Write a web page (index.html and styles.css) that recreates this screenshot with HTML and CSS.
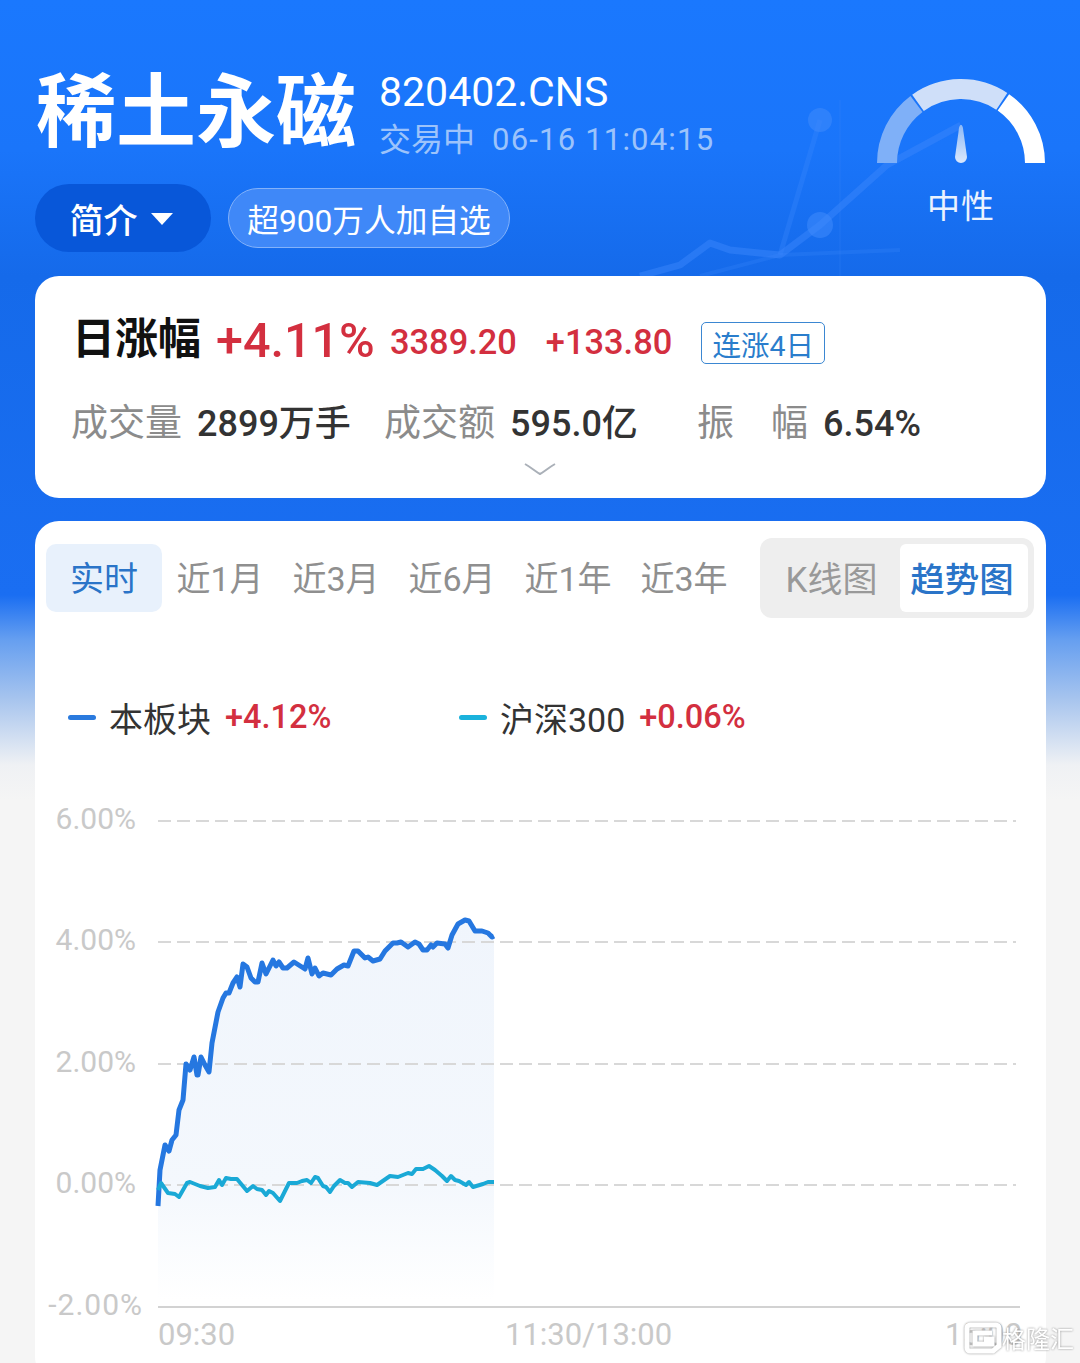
FILE: index.html
```html
<!DOCTYPE html>
<html lang="zh-CN">
<head>
<meta charset="utf-8">
<title>稀土永磁</title>
<link rel="stylesheet" href="styles.css">
</head>
<body>
<div class="page">
  <svg class="decor" width="1080" height="276" viewBox="0 0 1080 276">
    <line class="decor-rule" x1="840" y1="100" x2="840" y2="276"/>
    <polyline class="decor-line" points="640,276 680,265 710,243 730,250 780,255 820,225 887,165 961,125"/>
    <polyline class="decor-line soft" points="700,276 780,255 900,250"/>
    <polyline class="decor-line thin" points="780,255 820,120"/>
    <circle class="decor-dot" cx="820" cy="120" r="12"/>
    <circle class="decor-dot" cx="820" cy="225" r="13"/>
  </svg>
  <header class="header">
    <div class="header-main">
      <div class="title-row">
        <h1 class="title">稀土永磁</h1>
        <div class="meta">
          <div class="code">820402.CNS</div>
          <div class="status"><span>交易中</span><span class="time">06-16 11:04:15</span></div>
        </div>
      </div>
      <div class="pill-row">
        <div class="intro"><span>简介</span><i class="caret"></i></div>
        <div class="watch">超900万人加自选</div>
      </div>
    </div>
    <div class="gauge">
      <svg width="170" height="90" viewBox="876 77 170 90">
        <defs>
          <linearGradient id="needle" x1="0" y1="0" x2="0" y2="1">
            <stop offset="0" stop-color="#8fbaf6"/>
            <stop offset="1" stop-color="#dbe8fc"/>
          </linearGradient>
        </defs>
        <path class="arc arc-a" d="M887 163A74 74 0 0 1 916.5 103.9"/>
        <path class="arc arc-b" d="M918 102.8A74 74 0 0 1 1001.8 101.3"/>
        <path class="arc arc-c" d="M1003.4 102.4A74 74 0 0 1 1035 163"/>
        <path fill="url(#needle)" d="M961 125C962.5 125 963 127 963.5 132L967 157A6 6 0 1 1 955 157L958.5 132C959 127 959.5 125 961 125Z"/>
      </svg>
      <div class="gauge-label">中性</div>
    </div>
  </header>

  <section class="card summary">
    <div class="sum-top">
      <span class="sum-name">日涨幅</span>
      <span class="sum-pct">+4.11%</span>
      <span class="sum-num">3389.20</span>
      <span class="sum-num">+133.80</span>
      <span class="badge">连涨4日</span>
    </div>
    <div class="sum-stats">
      <div class="stat stat-vol"><span class="stat-k">成交量</span><span class="stat-v">2899万手</span></div>
      <div class="stat stat-amt"><span class="stat-k">成交额</span><span class="stat-v">595.0亿</span></div>
      <div class="stat stat-amp"><span class="stat-k spread"><b>振</b><b>幅</b></span><span class="stat-v">6.54%</span></div>
    </div>
    <svg class="chev" width="32" height="14" viewBox="0 0 32 14"><path d="M1 2C8 6 12 10 16 12C20 10 24 6 31 2"/></svg>
  </section>

  <section class="card chart-card">
    <div class="toolbar">
      <nav class="tabs">
        <span class="tab on">实时</span>
        <span class="tab">近1月</span>
        <span class="tab">近3月</span>
        <span class="tab">近6月</span>
        <span class="tab">近1年</span>
        <span class="tab">近3年</span>
      </nav>
      <div class="seg">
        <span class="seg-item">K线图</span>
        <span class="seg-item on">趋势图</span>
      </div>
    </div>
    <div class="legend">
      <div class="leg leg-a"><i class="dash blue"></i><span class="leg-name">本板块</span><span class="leg-val">+4.12%</span></div>
      <div class="leg"><i class="dash teal"></i><span class="leg-name">沪深300</span><span class="leg-val">+0.06%</span></div>
    </div>
    <svg class="plot" width="1011" height="583" viewBox="35 780 1011 583">
      <defs>
        <linearGradient id="area" gradientUnits="userSpaceOnUse" x1="0" y1="920" x2="0" y2="1300">
          <stop offset="0" stop-color="#f0f5fc"/>
          <stop offset="0.7" stop-color="#f4f8fd"/>
          <stop offset="1" stop-color="#ffffff"/>
        </linearGradient>
      </defs>
      <path class="area" d="M158 1206L160 1170L165 1145L169 1151L172 1140L176 1135L179 1110L183 1100L186 1064L190 1070L194 1057L197 1075L198 1075L201 1057L205 1065L209 1072L212 1043L218 1012L223 998L226 993L229 993L233 983L237 977L240 987L243 964L247 967L251 978L255 982L258 982L262 963L266 974L273 960L276 966L279 962L283 968L287 968L294 962L305 969L308 958L312 974L315 968L319 976L323 973L331 975L337 969L344 965L348 966L354 951L358 951L365 958L368 957L373 961L380 959L385 951L393 943L397 943L401 942L408 947L415 942L419 944L423 950L427 950L431 945L433 947L437 943L445 944L448 948L452 935L458 924L465 920L469 921L475 931L482 931L488 933L492 937L494 936L494 1300L158 1300Z"/>
      <g class="grid">
        <line x1="158" y1="821" x2="1016" y2="821"/>
        <line x1="158" y1="942" x2="1016" y2="942"/>
        <line x1="158" y1="1064" x2="1016" y2="1064"/>
        <line x1="158" y1="1185" x2="1016" y2="1185"/>
      </g>
      <line class="axis" x1="158" y1="1307" x2="1020" y2="1307"/>
      <g class="ylabels">
        <text x="136" y="829">6.00%</text>
        <text x="136" y="950">4.00%</text>
        <text x="136" y="1072">2.00%</text>
        <text x="136" y="1193">0.00%</text>
        <text class="neg" x="143" y="1315">-2.00%</text>
      </g>
      <g class="xlabels">
        <text x="158" y="1345">09:30</text>
        <text x="505" y="1345">11:30/13:00</text>
        <text x="945" y="1345">15:00</text>
      </g>
      <polyline class="line-main" points="158,1206 160,1170 165,1145 169,1151 172,1140 176,1135 179,1110 183,1100 186,1064 190,1070 194,1057 197,1075 198,1075 201,1057 205,1065 209,1072 212,1043 218,1012 223,998 226,993 229,993 233,983 237,977 240,987 243,964 247,967 251,978 255,982 258,982 262,963 266,974 273,960 276,966 279,962 283,968 287,968 294,962 305,969 308,958 312,974 315,968 319,976 323,973 331,975 337,969 344,965 348,966 354,951 358,951 365,958 368,957 373,961 380,959 385,951 393,943 397,943 401,942 408,947 415,942 419,944 423,950 427,950 431,945 433,947 437,943 445,944 448,948 452,935 458,924 465,920 469,921 475,931 482,931 488,933 492,937 494,936"/>
      <polyline class="line-idx" points="158,1190 161,1183 168,1193 175,1194 179,1197 187,1183 190,1182 200,1186 208,1188 215,1187 219,1180 222,1185 226,1178 231,1179 237,1179 247,1191 253,1186 257,1189 262,1190 266,1195 269,1191 273,1193 280,1201 289,1183 294,1183 297,1183 302,1181 307,1180 311,1183 315,1177 318,1178 323,1186 326,1187 330,1192 334,1186 340,1180 345,1183 348,1183 352,1187 358,1182 370,1183 377,1185 390,1176 398,1177 408,1173 412,1174 416,1169 423,1169 429,1166 435,1170 442,1176 447,1181 451,1176 455,1180 459,1181 466,1185 469,1182 473,1187 483,1184 488,1182 494,1182"/>
    </svg>
  </section>

  <div class="mark">
    <svg width="38" height="32" viewBox="0 0 38 32"><path d="M6 3H32A3 3 0 0 1 35 6V24L29 29H6A3 3 0 0 1 3 26V6A3 3 0 0 1 6 3ZM28 11H11V22H28V17H20"/></svg>
    <span>格隆汇</span>
  </div>
</div>
</body>
</html>
```

FILE: styles.css
```css
* { box-sizing: border-box; }
html, body { margin: 0; padding: 0; }
body { width: 1080px; height: 1363px; overflow: hidden; font-family: Roboto, "Noto Sans CJK SC", sans-serif; }

.page {
  position: relative;
  width: 1080px;
  height: 1363px;
  overflow: hidden;
  padding: 0 34px 0 35px;
  background: linear-gradient(180deg, #1a78fe 0, #1a75fa 150px, #156aea 276px, #1a6ef2 595px, #669ff0 640px, #a8c5ee 700px, #eff1f4 765px, #f5f5f5 800px);
}
.decor { position: absolute; left: 0; top: 0; }
.decor-line { fill: none; stroke: #3a86fb; stroke-opacity: .5; stroke-width: 7; stroke-linejoin: round; }
.decor-line.thin { stroke-width: 5; stroke-opacity: .35; }
.decor-line.soft { stroke-width: 4; stroke-opacity: .25; }
.decor-rule { stroke: #3a86fb; stroke-opacity: .15; stroke-width: 2; }
.decor-dot { fill: #3f8afb; fill-opacity: .55; }

.header { position: relative; display: flex; justify-content: space-between; height: 276px; padding-top: 55px; }
.title-row { display: flex; align-items: flex-start; }
.title { margin: 0; width: 344px; padding-left: 1px; font-size: 80px; line-height: 100px; font-weight: 700; color: #fff; white-space: nowrap; font-family: "Noto Sans CJK SC", sans-serif; }
.meta { padding-top: 13px; }
.code { font-size: 41px; line-height: 48px; color: #fff; white-space: nowrap; }
.status { display: flex; gap: 17px; margin-top: 3px; font-size: 32px; line-height: 42px; color: #9cc3fb; white-space: nowrap; }
.time { font-size: 31px; letter-spacing: 1.2px; }
.pill-row { display: flex; align-items: center; gap: 17px; margin-top: 23px; }
.intro { display: flex; align-items: center; justify-content: center; gap: 13px; width: 176px; height: 68px; padding-right: 4px; border-radius: 34px; background: #0857d9; color: #fff; font-size: 34px; font-weight: 500; }
.caret { width: 0; height: 0; border-left: 11px solid transparent; border-right: 11px solid transparent; border-top: 12px solid #fff; margin-top: 2px; }
.watch { display: flex; align-items: center; justify-content: center; width: 282px; height: 60px; border-radius: 30px; background: #3f88f8; border: 1px solid #83b2fa; color: #fff; font-size: 31.7px; white-space: nowrap; }
.gauge { display: flex; flex-direction: column; align-items: center; width: 170px; margin-top: 22px; }
.gauge svg { display: block; }
.arc { fill: none; stroke-width: 20; }
.arc-a { stroke: #7fb0f8; }
.arc-b { stroke: #cfdff9; }
.arc-c { stroke: #fff; }
.gauge-label { margin-top: 18px; font-size: 33px; line-height: 44px; color: #eaf2fe; letter-spacing: 1px; }

.card { position: relative; width: 1011px; background: #fff; border-radius: 24px; }
.summary { height: 222px; padding: 39px 0 0 37px; }
.sum-top { display: flex; align-items: center; height: 54px; white-space: nowrap; }
.sum-name { font-size: 43px; font-weight: 700; color: #111; width: 144px; margin-top: -15px; font-family: "Noto Sans CJK SC", sans-serif; }
.sum-pct { font-size: 48.5px; font-weight: 500; color: #d32f3f; width: 174px; margin-top: -4px; }
.sum-num { font-size: 34.4px; font-weight: 500; color: #d32f3f; margin-right: 29px; }
.badge { display: flex; align-items: center; justify-content: center; width: 124px; height: 42px; margin-top: 2px; border: 1px solid #3b87d2; border-radius: 5px; color: #2a7dcc; font-size: 28.5px; }
.sum-stats { display: flex; margin: 24px 0 0 -1px; height: 46px; align-items: baseline; white-space: nowrap; }
.stat { display: flex; align-items: baseline; }
.stat-vol { width: 313px; }
.stat-amt { width: 313px; }
.stat-k { font-size: 37px; color: #8b8b8b; }
.stat-v { font-size: 36px; font-weight: 500; color: #333; margin-left: 15px; }
.spread { display: flex; width: 111px; justify-content: space-between; }
.spread b { font-weight: 400; }
.chev { position: absolute; left: 489px; top: 186px; }
.chev path { fill: none; stroke: #aab0b8; stroke-width: 2; }

.chart-card { height: 860px; margin-top: 23px; padding-top: 17px; }
.toolbar { display: flex; height: 80px; padding-left: 11px; }
.tabs { display: flex; height: 68px; margin-top: 6px; }
.tab { display: flex; align-items: center; justify-content: center; width: 116px; height: 68px; padding-bottom: 3px; font-size: 34px; color: #8f8f8f; border-radius: 10px; white-space: nowrap; }
.tab.on { background: #e8f1fc; color: #2a74c8; }
.seg { display: flex; align-items: center; width: 274px; height: 80px; margin-left: 18px; padding: 6px; background: #eeeeee; border-radius: 12px; }
.seg-item { display: flex; align-items: center; justify-content: center; width: 134px; height: 68px; padding-bottom: 3px; padding-right: 3px; font-size: 35px; color: #999; white-space: nowrap; }
.seg-item.on { width: 128px; padding-right: 4px; background: #fff; border-radius: 6px; color: #2a74c8; font-weight: 500; font-size: 34.5px; }
.legend { display: flex; height: 44px; margin-top: 77px; padding-left: 33px; align-items: center; white-space: nowrap; }
.leg { display: flex; align-items: center; }
.leg-a { width: 391px; }
.dash { width: 28px; height: 5px; border-radius: 3px; margin-right: 13px; }
.dash.blue { background: #2a7ade; }
.dash.teal { background: #1ab2dc; }
.leg-name { font-size: 34px; color: #333; margin-right: 14px; }
.leg-val { font-size: 32.5px; font-weight: 500; color: #d32f3f; }
.plot { display: block; margin-top: 41px; }
.grid line { stroke: #d8d8d8; stroke-width: 2; stroke-dasharray: 13 6; }
.axis { stroke: #d2d2d2; stroke-width: 2; }
.ylabels text { font-size: 30px; fill: #c9c9c9; text-anchor: end; }
.ylabels .neg { letter-spacing: 1px; }
.xlabels text { font-size: 31px; fill: #c9c9c9; }
.area { fill: url(#area); }
.line-main { fill: none; stroke: #2577e0; stroke-width: 5; stroke-linejoin: round; }
.line-idx { fill: none; stroke: #1aa9d6; stroke-width: 4; stroke-linejoin: round; }

.mark { position: absolute; left: 964px; top: 1322px; display: flex; align-items: center; filter: drop-shadow(0 0 1px rgba(110,110,110,.75)); }
.mark svg { display: block; }
.mark path { fill: none; stroke: #fff; stroke-width: 5; }
.mark span { font-size: 24px; line-height: 32px; color: #fff; white-space: nowrap; font-family: "Noto Sans CJK SC", sans-serif; }
```
